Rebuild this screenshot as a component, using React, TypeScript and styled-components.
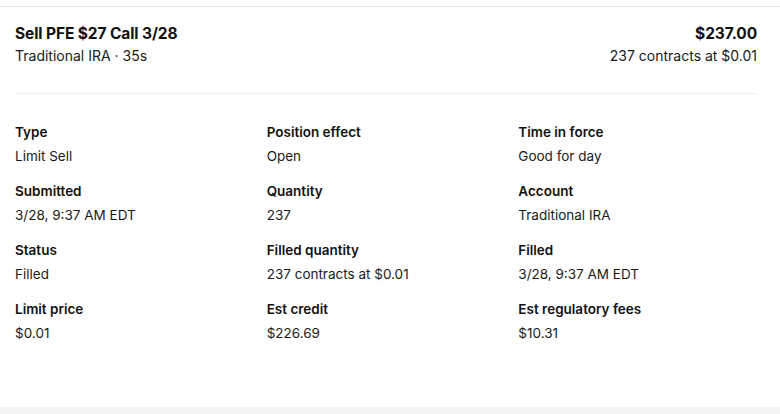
import React from "react";
import styled, { createGlobalStyle } from "styled-components";

const Global = createGlobalStyle`
  html, body { margin: 0; padding: 0; background: #fff; }
  body {
    font-family: Inter, "Noto Sans", "Liberation Sans", sans-serif;
    color: #111;
    -webkit-font-smoothing: antialiased;
  }
`;

const Page = styled.div`
  height: 414px;
  display: flex;
  flex-direction: column;
  padding-top: 6px;
  box-sizing: border-box;
`;

const Card = styled.div`
  flex: 1;
  border-top: 1px solid #ececec;
  display: flex;
  flex-direction: column;
`;

const Header = styled.div`
  margin: 0 23px 0 15px;
  padding: 17px 0 27px;
  border-bottom: 1px solid #ededed;
  display: flex;
  justify-content: space-between;
`;

const Side = styled.div<{ $right?: boolean }>`
  display: flex;
  flex-direction: column;
  gap: 2px;
  align-items: ${(p) => (p.$right ? "flex-end" : "flex-start")};
`;

const Title = styled.div`
  font-size: 15.5px;
  font-weight: 700;
  line-height: 20px;
  letter-spacing: -0.1px;
`;

const Sub = styled.div`
  font-size: 14px;
  line-height: 20px;
  color: #1a1a1a;
`;

const Grid = styled.div`
  display: grid;
  grid-template-columns: repeat(3, 1fr);
  row-gap: 15px;
  padding: 28px 10px 0 15px;
`;

const Cell = styled.div`
  display: flex;
  flex-direction: column;
  gap: 4px;
`;

const Label = styled.div`
  font-size: 13.5px;
  font-weight: 600;
  line-height: 20px;
`;

const Value = styled.div`
  font-size: 13.5px;
  line-height: 20px;
  color: #1a1a1a;
`;

const Band = styled.div`
  height: 7px;
  background: #f3f3f3;
`;

const items: [string, string][] = [
  ["Type", "Limit Sell"],
  ["Position effect", "Open"],
  ["Time in force", "Good for day"],
  ["Submitted", "3/28, 9:37 AM EDT"],
  ["Quantity", "237"],
  ["Account", "Traditional IRA"],
  ["Status", "Filled"],
  ["Filled quantity", "237 contracts at $0.01"],
  ["Filled", "3/28, 9:37 AM EDT"],
  ["Limit price", "$0.01"],
  ["Est credit", "$226.69"],
  ["Est regulatory fees", "$10.31"],
];

export default function App() {
  return (
    <>
      <Global />
      <Page>
        <Card>
          <Header>
            <Side>
              <Title>Sell PFE $27 Call 3/28</Title>
              <Sub>Traditional IRA · 35s</Sub>
            </Side>
            <Side $right>
              <Title>$237.00</Title>
              <Sub>237 contracts at $0.01</Sub>
            </Side>
          </Header>
          <Grid>
            {items.map(([l, v]) => (
              <Cell key={l}>
                <Label>{l}</Label>
                <Value>{v}</Value>
              </Cell>
            ))}
          </Grid>
        </Card>
        <Band />
      </Page>
    </>
  );
}
